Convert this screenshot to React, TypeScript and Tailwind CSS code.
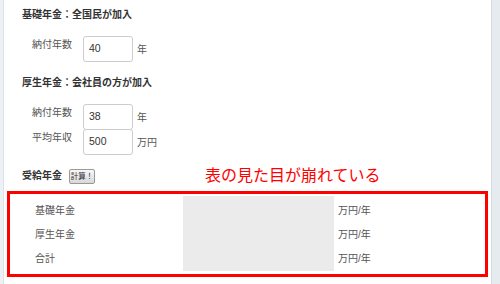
import React from "react"

const font = { fontFamily: '"Liberation Sans", "Noto Sans CJK JP", sans-serif' }

// single input row: label, box, unit
const Field = ({ label, value, unit }: { label: string; value: string; unit: string }) => (
  <div className="flex items-start">
    <div className="mt-[3px] w-[51px] pl-[28px] box-content text-[10px] leading-[12px] text-[#555]">{label}</div>
    <div className="flex h-[26px] w-[50px] items-center rounded-[3px] border border-[#ccc] bg-white pl-[5px] text-[10.5px] text-[#333]">
      {value}
    </div>
    <div className="ml-[4px] self-center text-[10px] text-[#555]">{unit}</div>
  </div>
)

export default function App() {
  return (
    <div className="flex h-[284px] w-[500px] overflow-hidden bg-white" style={font}>
      <div className="w-[3px] shrink-0 bg-[#eef1f4]" />
      <div className="w-[1px] shrink-0 bg-[#dde2e6]" />

      <main className="flex-1 pt-[9px]">
        <h2 className="pl-[18px] text-[10px] font-bold leading-[12px] text-[#333]">基礎年金：全国民が加入</h2>

        <div className="mt-[15px]">
          <Field label="納付年数" value="40" unit="年" />
        </div>

        <h2 className="mt-[15px] pl-[18px] text-[10px] font-bold leading-[12px] text-[#333]">厚生年金：会社員の方が加入</h2>

        <div className="mt-[15px] flex flex-col">
          <Field label="納付年数" value="38" unit="年" />
          <div className="-mt-[1px]">
            <Field label="平均年収" value="500" unit="万円" />
          </div>
        </div>

        <div className="mt-[12px] flex items-center pl-[18px]">
          <span className="text-[10px] font-bold leading-[12px] text-[#333]">受給年金</span>
          <button className="ml-[7px] h-[15px] w-[26px] rounded-[2px] border border-[#999] bg-gradient-to-b from-[#f8f8f8] to-[#d8d8d8] text-[7.5px] leading-[13px] text-[#333]">
            計算！
          </button>
          <span className="ml-[110px] text-[16px] leading-[18px] text-[#f00]">表の見た目が崩れている</span>
        </div>

        <div className="mx-[3px] mt-[6px] flex h-[86px] border-[3px] border-[#f00]">
          <div className="flex w-[173px] flex-col pt-[4px] pl-[25px]">
            {["基礎年金", "厚生年金", "合計"].map((t) => (
              <div key={t} className="flex h-[24px] items-center text-[10px] text-[#555]">{t}</div>
            ))}
          </div>
          <div className="mt-[2px] h-[75px] w-[151px] bg-[#ebebeb]" />
          <div className="flex flex-col pt-[4px] pl-[4px]">
            {[0, 1, 2].map((i) => (
              <div key={i} className="flex h-[24px] items-center text-[10px] text-[#555]">万円/年</div>
            ))}
          </div>
        </div>
      </main>

      <div className="w-[1px] shrink-0 bg-[#d5dbe0]" />
      <div className="w-[8px] shrink-0 bg-[#e6ebef]" />
    </div>
  )
}
